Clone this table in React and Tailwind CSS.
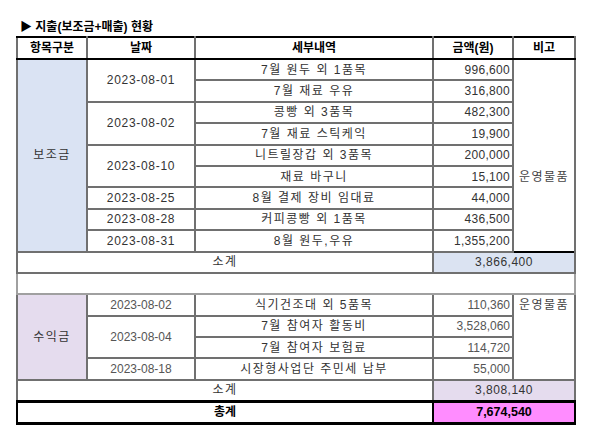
const FONT = { fontFamily: '"Liberation Sans", "Noto Sans CJK KR", sans-serif' };

const cell = 'border-2 border-[#707070] h-[21.4px] p-0 text-[12px] text-[#333] leading-none';
const noteCell = 'border-x-2 border-y-0 border-[#707070] h-[21.4px] p-0 text-[12px] text-[#444] text-center leading-none';

const section1 = [
  { date: '2023-08-01', span: 2, detail: '7월 원두 외 1품목', amount: '996,600' },
  { detail: '7월 재료 우유', amount: '316,800' },
  { date: '2023-08-02', span: 2, detail: '콩빵 외 3품목', amount: '482,300' },
  { detail: '7월 재료 스틱케익', amount: '19,900' },
  { date: '2023-08-10', span: 2, detail: '니트릴장갑 외 3품목', amount: '200,000' },
  { detail: '재료 바구니', amount: '15,100', note: '운영물품' },
  { date: '2023-08-25', span: 1, detail: '8월 결제 장비 임대료', amount: '44,000' },
  { date: '2023-08-28', span: 1, detail: '커피콩빵 외 1품목', amount: '436,500' },
  { date: '2023-08-31', span: 1, detail: '8월 원두,우유', amount: '1,355,200' },
];

const section2 = [
  { date: '2023-08-02', span: 1, detail: '식기건조대 외 5품목', amount: '110,360', note: '운영물품' },
  { date: '2023-08-04', span: 2, detail: '7월 참여자 활동비', amount: '3,528,060' },
  { detail: '7월 참여자 보험료', amount: '114,720' },
  { date: '2023-08-18', span: 1, detail: '시장형사업단 주민세 납부', amount: '55,000' },
];

function Rows({ rows, label, labelBg, small }) {
  const date = small ? 'text-[10.5px] text-[#555]' : 'text-[12px] tracking-[0.7px]';
  const num = small ? 'text-[10.5px] text-[#555]' : 'text-[12px] tracking-[0.3px]';
  return rows.map((r, i) => (
    <tr key={i}>
      {i === 0 && (
        <td rowSpan={rows.length} className={`${cell} ${labelBg} text-center tracking-[1.5px]`}>
          {label}
        </td>
      )}
      {r.date && (
        <td rowSpan={r.span} className={`${cell} text-center ${date}`}>
          {r.date}
        </td>
      )}
      <td className={`${cell} text-center tracking-[1.5px]`}>{r.detail}</td>
      <td className={`${cell} text-right pr-[2px] ${num}`}>{r.amount}</td>
      <td className={`${noteCell} tracking-[1.5px]`}>{r.note || ''}</td>
    </tr>
  ));
}

export default function App() {
  return (
    <div className="w-[589px] h-[447px] bg-white pt-[19px] pl-[16px]" style={FONT}>
      <div className="pl-[4px] h-[17px] text-[12px] font-bold text-black leading-[17px]">
        ▶ 지출(보조금+매출) 현황
      </div>
      <table className="table-fixed border-collapse w-[558px] border-x-2 border-black">
        <colgroup>
          <col className="w-[70px]" />
          <col className="w-[108px]" />
          <col className="w-[238px]" />
          <col className="w-[80px]" />
          <col className="w-[62px]" />
        </colgroup>
        <tbody>
          <tr>
            {['항목구분', '날짜', '세부내역', '금액(원)', '비고'].map((h) => (
              <td
                key={h}
                className="border-2 border-[#707070] border-t-black border-b-black h-[22px] p-0 text-center text-[12px] font-bold text-black leading-none"
              >
                {h}
              </td>
            ))}
          </tr>
          <Rows rows={section1} label="보조금" labelBg="bg-[#dae3f3]" />
          <tr>
            <td colSpan={3} className={`${cell} border-t-black text-center tracking-[1.5px]`}>소계</td>
            <td colSpan={2} className={`${cell} border-t-black bg-[#dbe3f2] text-center tracking-[0.5px]`}>
              3,866,400
            </td>
          </tr>
          <tr>
            <td colSpan={5} className="border-2 border-[#a0a0a0] h-[21.4px] p-0" />
          </tr>
          <Rows rows={section2} label="수익금" labelBg="bg-[#e5dcee]" small />
          <tr>
            <td colSpan={3} className={`${cell} text-center tracking-[1.5px]`}>소계</td>
            <td colSpan={2} className={`${cell} bg-[#e5dcee] text-center tracking-[0.5px]`}>
              3,808,140
            </td>
          </tr>
          <tr>
            <td colSpan={3} className="border-t-[3px] border-b-[3px] border-x-2 border-black h-[21.4px] p-0 text-center text-[12px] font-bold text-black">
              총계
            </td>
            <td colSpan={2} className="border-t-[3px] border-b-[3px] border-x-2 border-black border-l-[#707070] h-[21.4px] p-0 bg-[#ff8cff] text-center text-[12.5px] font-bold text-black">
              7,674,540
            </td>
          </tr>
        </tbody>
      </table>
    </div>
  );
}
